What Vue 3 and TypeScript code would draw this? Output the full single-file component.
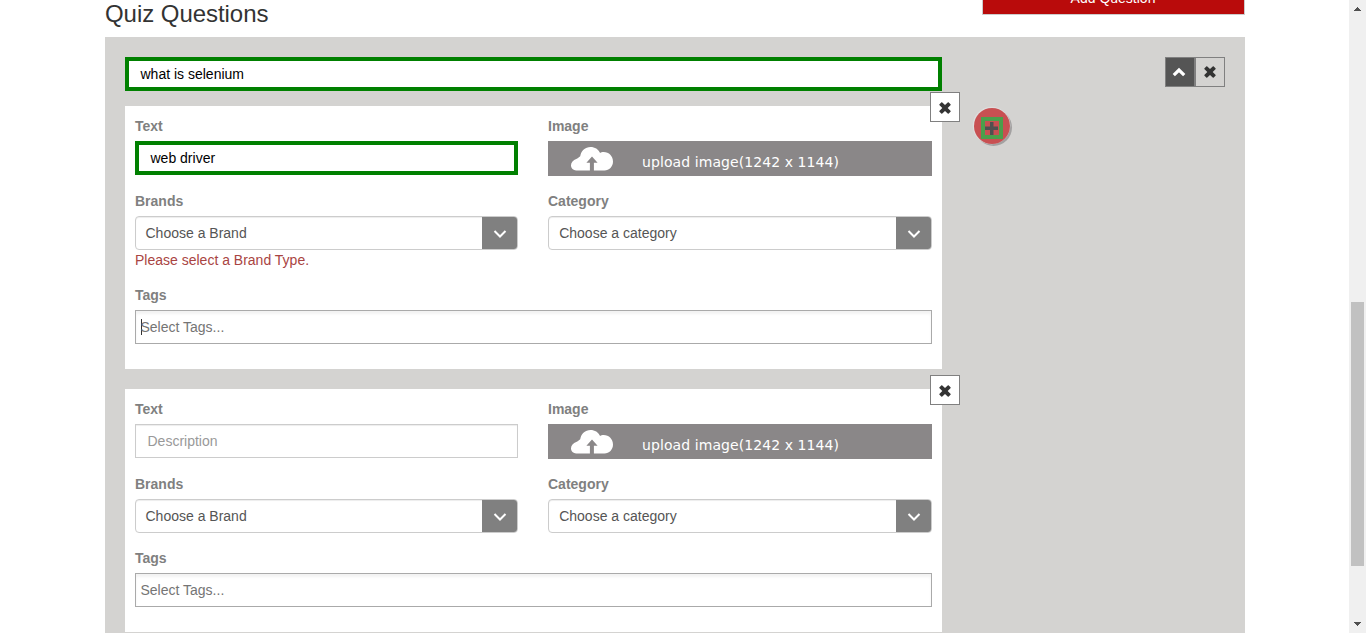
<script setup lang="ts">
interface Answer {
  id: number
  text: string
  error: string
  focused: boolean
}

const question: string = 'what is selenium'
const answers: Answer[] = [
  { id: 1, text: 'web driver', error: 'Please select a Brand Type.', focused: true },
  { id: 2, text: '', error: '', focused: false },
]
</script>

<template>
  <div class="viewport">
    <div class="page">
      <header class="header">
        <h2 class="title">Quiz Questions</h2>
        <button class="add-question" type="button">Add Question</button>
      </header>

      <main class="panel">
        <section class="question">
          <div class="field valid">{{ question }}</div>

          <article v-for="answer in answers" :key="answer.id" class="card">
            <button class="icon-button remove" type="button" aria-label="Remove answer">
              <svg width="12" height="12" viewBox="0 0 12 12">
                <path d="M2.5.3.3 2.5V3l3 3-3 3v.5l2.2 2.2H3l3-2.8 3 2.8h.5l2.2-2.2V9l-3-3 3-3v-.5L9.500.3H9L6 3.100 3 .3Z" fill="#333" />
              </svg>
            </button>

            <div class="columns">
              <div class="group">
                <div class="label">Text</div>
                <div v-if="answer.text" class="field valid">{{ answer.text }}</div>
                <div v-else class="field empty">Description</div>
              </div>
              <div class="group">
                <div class="label">Image</div>
                <div class="upload">
                  <svg class="cloud" width="44" height="26" viewBox="0 0 44 26">
                    <path d="M8 24.500C3.500 24.500 1 22.500 1 19.200c0-2.800 2.300-5 5.200-6.200 1.500-.8 2.800-1.500 4-2.800C11.300 4.500 15.200 1 20.500 1c4.400 0 7.900 2.200 9.600 6 1-.6 2-.9 3.500-.9 5.400 0 9.400 4.200 9.400 9.500 0 5.200-3.800 8.900-8.500 8.900Z" fill="#fff" />
                    <path d="m22 10.500 5.600 6.200h-3.700V25h-4v-8.300h-3.500Z" fill="#8a8788" />
                  </svg>
                  <span class="upload-text">upload image(1242 x 1144)</span>
                </div>
              </div>
            </div>

            <div class="columns">
              <div class="group">
                <div class="label">Brands</div>
                <div class="select">
                  <span class="choice">Choose a Brand</span>
                  <span class="arrow">
                    <svg width="14" height="10" viewBox="0 0 14 10"><path d="m1.500 2 5.500 5.500L12.500 2" fill="none" stroke="#fff" stroke-width="2" /></svg>
                  </span>
                </div>
                <div v-if="answer.error" class="error">{{ answer.error }}</div>
              </div>
              <div class="group">
                <div class="label">Category</div>
                <div class="select">
                  <span class="choice wide">Choose a category</span>
                  <span class="arrow">
                    <svg width="14" height="10" viewBox="0 0 14 10"><path d="m1.500 2 5.500 5.500L12.500 2" fill="none" stroke="#fff" stroke-width="2" /></svg>
                  </span>
                </div>
              </div>
            </div>

            <div class="group">
              <div class="label">Tags</div>
              <div class="field tags">
                <span v-if="answer.focused" class="caret"></span>
                <span class="tags-hint">Select Tags...</span>
              </div>
            </div>
          </article>
        </section>

        <button class="add-answer" type="button" aria-label="Add answer">
          <svg width="42" height="42" viewBox="0 0 42 42">
            <circle cx="21.500" cy="21.500" r="18.500" fill="#a3a1a1" />
            <circle cx="19.500" cy="19.500" r="18.800" fill="#dedddd" />
            <circle cx="20" cy="20" r="18" fill="#c85052" />
            <rect x="11" y="13" width="18" height="18" fill="none" stroke="#4b9f4b" stroke-width="4" />
            <path d="M18 16h3.500v4.500H26V24h-4.500v5H18v-5h-5v-3.500h5Z" fill="#505050" />
          </svg>
        </button>

        <div class="controls">
          <button class="icon-button collapse" type="button" aria-label="Collapse question">
            <svg width="14" height="10" viewBox="0 0 14 10"><path d="M1.800 8.200 7 3l5.200 5.200" fill="none" stroke="#fff" stroke-width="3.200" /></svg>
          </button>
          <button class="icon-button delete" type="button" aria-label="Delete question">
            <svg width="12" height="12" viewBox="0 0 12 12">
              <path d="M2.5.3.3 2.5V3l3 3-3 3v.5l2.2 2.2H3l3-2.8 3 2.8h.5l2.2-2.2V9l-3-3 3-3v-.5L9.500.3H9L6 3.100 3 .3Z" fill="#333" />
            </svg>
          </button>
        </div>
      </main>
    </div>

    <aside class="scrollbar">
      <svg width="7" height="4" viewBox="0 0 7 4" shape-rendering="crispEdges"><path d="M3 0h1v1h1v1h1v1h1v1H0V3h1V2h1V1h1Z" fill="#505050" /></svg>
      <div class="thumb"></div>
      <svg width="7" height="4" viewBox="0 0 7 4" shape-rendering="crispEdges"><path d="M0 0h7v1H6v1H5v1H4v1H3V3H2V2H1V1H0Z" fill="#505050" /></svg>
    </aside>
  </div>
</template>

<style>
body {
  margin: 0;
  overflow: hidden;
}
</style>

<style scoped>
* {
  box-sizing: border-box;
}
.viewport {
  display: flex;
  width: 1366px;
  height: 633px;
  overflow: hidden;
  background: #fff;
  color: #333;
  font: 14px/20px "Liberation Sans", Arial, sans-serif;
}
button {
  margin: 0;
  padding: 0;
  font: inherit;
}
.page {
  width: 1349px;
  height: 633px;
  padding: 0 104px 0 105px;
  overflow: hidden;
}
.header {
  display: flex;
  justify-content: space-between;
  align-items: flex-end;
  height: 37px;
}
.title {
  margin: 0 0 10px;
  font-size: 24px;
  font-weight: 400;
  line-height: 26px;
  letter-spacing: -0.05px;
}
.add-question {
  flex: none;
  width: 263px;
  height: 34px;
  margin-bottom: 22px;
  padding-right: 1px;
  border: 1px solid #ccc;
  background: #b90b0b;
  color: #fff;
}
.panel {
  display: flex;
  align-items: flex-start;
  width: 1140px;
  height: 640px;
  padding: 20px;
  background: #d4d3d1;
}
.question {
  flex: none;
  width: 817px;
}
.field {
  height: 34px;
  padding: 6px 12px;
  border: 1px solid #ccc;
  background: #fff;
  box-shadow: inset 0 1px 1px rgba(0, 0, 0, 0.075);
}
.field.valid {
  padding: 3px 11.5px;
  border: 4px solid #008000;
  color: #000;
  box-shadow: none;
}
.field.empty {
  padding-left: 11.5px;
  color: #999;
}
.card {
  position: relative;
  margin-bottom: 20px;
  padding: 10px 10px;
  background: #fff;
}
.question > .field {
  margin-bottom: 15px;
}
.columns {
  display: grid;
  grid-template-columns: 383px 384px;
  column-gap: 30px;
}
.group {
  padding-bottom: 15px;
}
.label {
  height: 20px;
  margin-bottom: 5px;
  color: #808080;
  font-weight: 700;
}
.upload {
  display: flex;
  align-items: center;
  height: 35px;
  padding-left: 22px;
  background: #8a8788;
  color: #fff;
}
.cloud {
  flex: none;
  margin-top: 1px;
}
.upload-text {
  margin: 6px 0 0 28px;
  font: 14px/20px "DejaVu Sans", Verdana, sans-serif;
  letter-spacing: 0.08px;
}
.select {
  display: flex;
  height: 34px;
  border: 1px solid #ccc;
  border-radius: 4px;
  box-shadow: inset 0 1px 1px rgba(0, 0, 0, 0.075);
  color: #555;
  overflow: hidden;
}
.choice {
  flex: 1;
  padding: 6px 9.5px;
}
.choice.wide {
  padding-left: 10.2px;
}
.arrow {
  display: flex;
  align-items: center;
  justify-content: center;
  width: 35px;
  background: #808080;
}
.arrow svg {
  margin: 2px 0 0 1px;
}
.error {
  height: 20px;
  color: #a94442;
}
.tags {
  display: flex;
  align-items: center;
  padding: 0 5px;
  border-color: #aaa;
  color: #757575;
  box-shadow: inset 0 3px 3px rgba(0, 0, 0, 0.05);
}
.tags-hint {
  margin-left: -0.5px;
}
.caret {
  width: 1px;
  height: 16px;
  margin-right: -1px;
  background: #333;
}
.icon-button {
  display: flex;
  align-items: center;
  justify-content: center;
  width: 30px;
  height: 30px;
  border: 1px solid #808080;
  background: transparent;
}
.remove {
  position: absolute;
  top: -14px;
  right: -18px;
  background: #fff;
}
.remove svg {
  margin-top: 2px;
}
.delete svg {
  margin-left: -1px;
}
.add-answer {
  flex: none;
  width: 42px;
  height: 42px;
  margin: 49px 0 0 30px;
  border: 0;
  background: none;
}
.add-answer svg {
  display: block;
}
.controls {
  display: flex;
  margin-left: auto;
}
.collapse {
  background: #555;
}
.collapse svg {
  margin: 0 0 0 -2px;
}
.scrollbar {
  display: flex;
  flex-direction: column;
  align-items: center;
  width: 17px;
  padding: 7px 0;
  background: #f0f0f0;
}
.thumb {
  width: 13px;
  height: 264px;
  margin: 291px 0 56px;
  background: #c1c1c1;
}
.scrollbar svg {
  flex: none;
}
</style>
